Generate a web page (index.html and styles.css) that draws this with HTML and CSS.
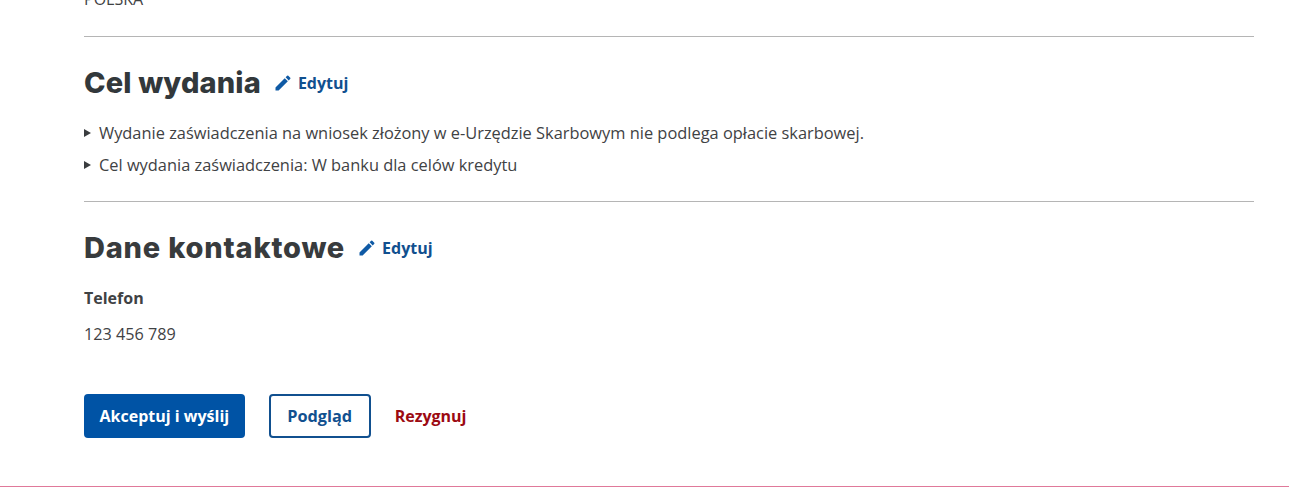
FILE: index.html
```html
<!DOCTYPE html>
<html lang="pl">
<head>
	<title>Podsumowanie</title>
	<meta charset="utf-8">
	<link rel="stylesheet" href="styles.css">
</head>
<body>
	<div class="page">
		<p class="country">POLSKA</p>

		<section class="section">
			<div class="section-head">
				<h2>Cel wydania</h2>
				<a class="edit" href="#">
					<svg viewBox="0 0 24 24" width="20" height="20"><path d="M3 17.25V21h3.75L17.81 9.94l-3.75-3.75L3 17.25zM20.71 7.04a1 1 0 0 0 0-1.41l-2.34-2.34a1 1 0 0 0-1.41 0l-1.83 1.83 3.75 3.75 1.83-1.83z"/></svg>
					Edytuj
				</a>
			</div>
			<ul class="notes">
				<li>Wydanie zaświadczenia na wniosek złożony w e-Urzędzie Skarbowym nie podlega opłacie skarbowej.</li>
				<li>Cel wydania zaświadczenia: W banku dla celów kredytu</li>
			</ul>
		</section>

		<section class="section">
			<div class="section-head">
				<h2 class="wide">Dane kontaktowe</h2>
				<a class="edit" href="#">
					<svg viewBox="0 0 24 24" width="20" height="20"><path d="M3 17.25V21h3.75L17.81 9.94l-3.75-3.75L3 17.25zM20.71 7.04a1 1 0 0 0 0-1.41l-2.34-2.34a1 1 0 0 0-1.41 0l-1.83 1.83 3.75 3.75 1.83-1.83z"/></svg>
					Edytuj
				</a>
			</div>
			<p class="label">Telefon</p>
			<p class="value">123 456 789</p>
		</section>

		<div class="actions">
			<a class="btn btn-primary" href="#">Akceptuj i wyślij</a>
			<a class="btn btn-outline" href="#">Podgląd</a>
			<a class="cancel" href="#">Rezygnuj</a>
		</div>
	</div>
	<div class="footer-line"></div>
</body>
</html>
```

FILE: styles.css
```css
html, body {
	margin: 0;
	height: 487px;
	overflow: hidden;
}
body {
	background: #fff;
	color: #3f4244;
	font-family: "Open Sans", "Liberation Sans", sans-serif;
	font-size: 16px;
	line-height: 24px;
}
.page {
	display: flow-root;
	margin: 0 35px 0 84px;
	height: 486px;
}
p {
	margin: 0;
}
.country {
	margin-top: -13px;
	height: 49px;
}
.section {
	border-top: 1px solid #b5b5b5;
}
.section-head {
	display: flex;
	align-items: center;
	gap: 12px;
	padding-top: 28px;
}
h2 {
	margin: 0;
	color: #32383b;
	font-family: Inter, "DejaVu Sans", sans-serif;
	font-size: 29px;
	font-weight: 800;
	letter-spacing: 0.15px;
	line-height: 36px;
}
h2.wide {
	color: #383b3d;
	letter-spacing: 0.8px;
}
.edit {
	display: flex;
	align-items: center;
	gap: 5px;
	color: #11508f;
	font-weight: 700;
	text-decoration: none;
}
.edit svg {
	fill: #0f5aa5;
}
.notes {
	list-style: none;
	margin: 20px 0 0;
	padding: 0 0 24px 15px;
	font-size: 16.4px;
}
.notes li {
	position: relative;
	margin-bottom: 8px;
}
.notes li:last-child {
	margin-bottom: 0;
}
.notes li::before {
	content: "";
	position: absolute;
	left: -15px;
	top: 8px;
	border-left: 7px solid #3a3d3f;
	border-top: 4px solid transparent;
	border-bottom: 4px solid transparent;
}
.label {
	margin-top: 20px;
	font-weight: 700;
}
.value {
	margin-top: 12px;
	font-size: 16.2px;
}
.actions {
	display: flex;
	align-items: center;
	margin-top: 48px;
}
.btn {
	box-sizing: border-box;
	height: 44px;
	display: flex;
	align-items: center;
	border-radius: 4px;
	font-weight: 700;
	text-decoration: none;
}
.btn-primary {
	padding: 0 15.5px;
	background: #0053a5;
	color: #fff;
}
.btn-outline {
	margin-left: 24px;
	padding: 0 16.5px;
	border: 2px solid #11508f;
	color: #11508f;
	font-size: 16.3px;
}
.cancel {
	margin-left: 24px;
	color: #9c0a12;
	font-weight: 700;
	text-decoration: none;
}
.footer-line {
	height: 1px;
	background: #e0799a;
}
```
